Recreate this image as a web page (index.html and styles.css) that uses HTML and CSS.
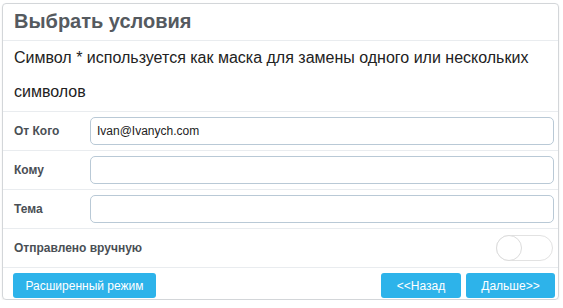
FILE: index.html
```html
<!DOCTYPE html>
<html lang="ru">
<head>
    <meta charset="UTF-8">
    <title>Выбрать условия</title>
    <link rel="stylesheet" href="styles.css">
</head>
<body>
    <div class="panel">
        <div class="panel-heading">Выбрать условия</div>
        <div class="panel-note">Символ * используется как маска для замены одного или нескольких символов</div>
        <div class="form-row">
            <label for="from">От Кого</label>
            <input type="text" id="from" value="Ivan@Ivanych.com">
        </div>
        <div class="form-row">
            <label for="to">Кому</label>
            <input type="text" id="to">
        </div>
        <div class="form-row">
            <label for="subject">Тема</label>
            <input type="text" id="subject">
        </div>
        <div class="form-row switch-row">
            <span class="switch-label">Отправлено вручную</span>
            <span class="switch"><span class="knob"></span></span>
        </div>
        <div class="panel-footer">
            <button class="btn btn-wide">Расширенный режим</button>
            <div class="nav-btns">
                <button class="btn btn-back">&lt;&lt;Назад</button>
                <button class="btn btn-next">Дальше&gt;&gt;</button>
            </div>
        </div>
    </div>
</body>
</html>
```

FILE: styles.css
```css
body {
    font-family: 'Liberation Sans', Arial, sans-serif;
    margin: 0;
    padding: 3px 4px 0 2px;
    background-color: #fff;
}
.panel {
    border: 1px solid #d3d6d9;
    border-radius: 4px;
    box-shadow: 0 1px 2px rgba(0, 0, 0, 0.08);
    height: 297px;
    box-sizing: border-box;
}
.panel-heading {
    height: 36px;
    line-height: 35px;
    padding-left: 11px;
    font-size: 20px;
    font-weight: bold;
    color: #555a5f;
    border-bottom: 1px solid #e9ecef;
}
.panel-note {
    padding: 0 10px 0 11px;
    height: 70px;
    font-size: 16px;
    line-height: 34px;
    color: #222;
    border-bottom: 1px solid #e9ecef;
}
.form-row {
    display: flex;
    align-items: center;
    height: 38px;
    padding: 0 4px 0 11px;
    border-bottom: 1px solid #e9ecef;
}
.form-row label,
.switch-label {
    width: 76px;
    font-size: 12px;
    font-weight: bold;
    color: #4a4f55;
}
.form-row input {
    flex: 1;
    height: 28px;
    box-sizing: border-box;
    border: 1px solid #b9c9d6;
    border-radius: 5px;
    padding: 0 6px;
    font-family: inherit;
    font-size: 12px;
    color: #222;
    outline: none;
}
.switch-row {
    justify-content: space-between;
}
.switch-label {
    width: auto;
}
.switch {
    width: 57px;
    height: 26px;
    border: 1px solid #e2e2e2;
    border-radius: 14px;
    box-sizing: border-box;
    position: relative;
    margin-right: 1px;
}
.knob {
    position: absolute;
    left: -1px;
    top: -1px;
    width: 26px;
    height: 26px;
    border-radius: 50%;
    border: 1px solid #dcdcdc;
    box-sizing: border-box;
    background: #fff;
}
.panel-footer {
    display: flex;
    justify-content: space-between;
    padding: 5px 3px 0 10px;
}
.nav-btns {
    display: flex;
    gap: 5px;
}
.btn {
    background-color: #2db3ea;
    color: #fff;
    border: none;
    border-radius: 3px;
    height: 25px;
    font-family: inherit;
    font-size: 12px;
    cursor: pointer;
    padding: 0;
}
.btn-wide {
    width: 143px;
}
.btn-back {
    width: 80px;
}
.btn-next {
    width: 89px;
}
```
